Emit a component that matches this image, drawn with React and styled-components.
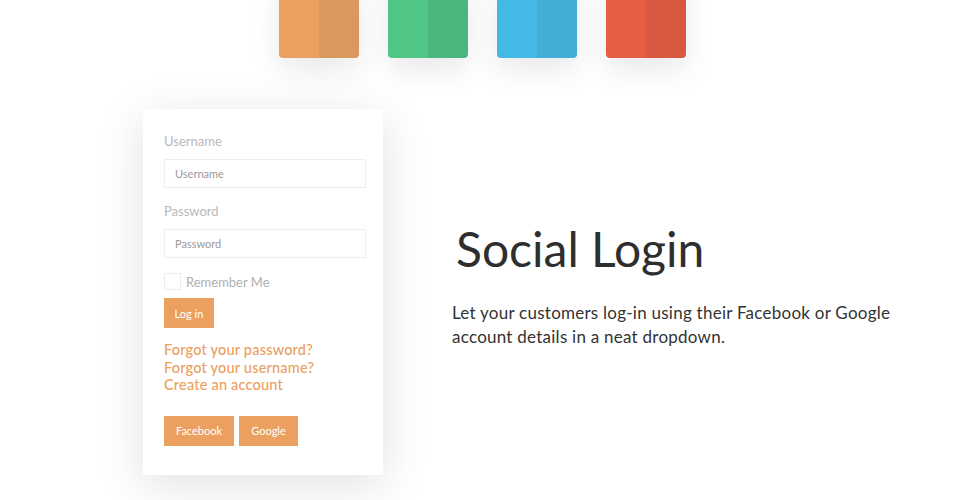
import React from 'react';
import styled, { createGlobalStyle } from 'styled-components';

const GlobalStyle = createGlobalStyle`
  html, body {
    margin: 0;
    padding: 0;
    background: #ffffff;
    font-family: Lato, "Liberation Sans", sans-serif;
    overflow: hidden;
  }
`;

const Page = styled.div`
  width: 965px;
  height: 500px;
  position: relative;
  overflow: hidden;
`;

const TileRow = styled.div`
  display: flex;
  justify-content: center;
  gap: 29px;
  margin-top: -22px;
`;

const Tile = styled.div`
  width: 80px;
  height: 80px;
  border-radius: 4px;
  background: linear-gradient(90deg, ${p => p.$light} 0 50%, ${p => p.$dark} 50% 100%);
  box-shadow: 0 12px 30px rgba(0, 0, 0, 0.09);
`;

const Main = styled.div`
  display: flex;
  align-items: flex-start;
  padding-left: 143px;
  margin-top: 51px;
`;

const Card = styled.div`
  width: 240px;
  box-sizing: border-box;
  padding: 24px 17px 29px 21px;
  background: #fff;
  box-shadow: 0 10px 45px rgba(0, 0, 0, 0.12);
  display: flex;
  flex-direction: column;
`;

const Label = styled.div`
  font-size: 13px;
  color: #b9b9b9;
  line-height: 16px;
  margin-bottom: 10px;
`;

const Input = styled.div`
  height: 29px;
  box-sizing: border-box;
  border: 1px solid #eeeeee;
  padding-left: 10px;
  display: flex;
  align-items: center;
  font-size: 11px;
  color: #9a9a9a;
  margin-bottom: ${p => p.$mb}px;
`;

const CheckRow = styled.label`
  display: flex;
  align-items: center;
  gap: 5px;
  font-size: 13px;
  color: #b0b0b0;
  margin-bottom: 8px;
`;

const Box = styled.span`
  width: 17px;
  height: 17px;
  box-sizing: border-box;
  border: 1px solid #ececf4;
  display: inline-block;
`;

const Button = styled.div`
  height: 30px;
  width: ${p => p.$w}px;
  background: #eba05f;
  color: #fff;
  font-size: 11px;
  display: flex;
  align-items: center;
  justify-content: center;
  box-sizing: border-box;
`;

const Links = styled.div`
  display: flex;
  flex-direction: column;
  margin-top: 13px;
  font-size: 14.5px;
  font-weight: 500;
  line-height: 17.5px;
  color: #eba05f;
  letter-spacing: 0.2px;
`;

const ButtonRow = styled.div`
  display: flex;
  gap: 5px;
  margin-top: 22px;
`;

const Info = styled.div`
  margin-left: 69px;
  margin-top: 110px;
  color: #333;
`;

const Title = styled.h1`
  margin: 0 0 0 4px;
  font-size: 48px;
  font-weight: 400;
  line-height: 60px;
  color: #2e2e2e;
`;

const Text = styled.p`
  margin: 22px 0 0;
  font-size: 17px;
  line-height: 24px;
  letter-spacing: 0.25px;
  color: #333;
  width: 470px;
`;

const tiles = [
  ['#eba05f', '#da975e'],
  ['#50c686', '#4bb67d'],
  ['#44b9e6', '#42aed8'],
  ['#e85e44', '#d95841'],
];

export default function App() {
  return (
    <Page>
      <GlobalStyle />
      <TileRow>
        {tiles.map(([light, dark]) => (
          <Tile key={light} $light={light} $dark={dark} />
        ))}
      </TileRow>
      <Main>
        <Card>
          <Label>Username</Label>
          <Input $mb={15}>Username</Input>
          <Label>Password</Label>
          <Input $mb={15}>Password</Input>
          <CheckRow>
            <Box />
            Remember Me
          </CheckRow>
          <Button $w={50}>Log in</Button>
          <Links>
            <span>Forgot your password?</span>
            <span>Forgot your username?</span>
            <span>Create an account</span>
          </Links>
          <ButtonRow>
            <Button $w={70}>Facebook</Button>
            <Button $w={59}>Google</Button>
          </ButtonRow>
        </Card>
        <Info>
          <Title>Social Login</Title>
          <Text>
            Let your customers log-in using their Facebook or Google account details in a neat dropdown.
          </Text>
        </Info>
      </Main>
    </Page>
  );
}
